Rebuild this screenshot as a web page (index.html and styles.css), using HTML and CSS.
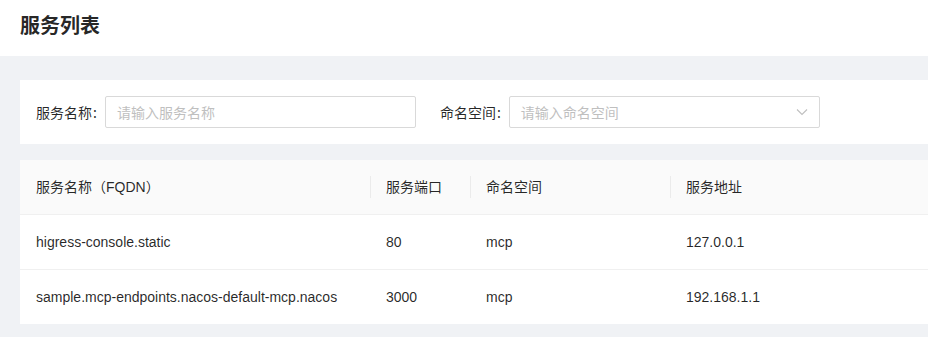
FILE: index.html
```html
<!DOCTYPE html>
<html lang="zh-CN">
<head>
<meta charset="utf-8">
<title>服务列表</title>
<link rel="stylesheet" href="styles.css">
</head>
<body>
<div class="page">
  <header class="page-header">
    <h1 class="page-title">服务列表</h1>
  </header>
  <main class="content">
    <section class="filter-card">
      <div class="form-item">
        <label class="form-label">服务名称<span class="colon">:</span></label>
        <div class="input"><span class="placeholder">请输入服务名称</span></div>
      </div>
      <div class="form-item">
        <label class="form-label">命名空间<span class="colon">:</span></label>
        <div class="input select">
          <span class="placeholder">请输入命名空间</span>
          <svg class="arrow" viewBox="0 0 12 12" width="12" height="12"><path d="M1 3.5 L6 8.5 L11 3.5" fill="none" stroke="#bfbfbf" stroke-width="1.1"/></svg>
        </div>
      </div>
    </section>
    <section class="table-card">
      <div class="row head">
        <div class="cell c1">服务名称（FQDN）</div>
        <div class="cell c2 sep">服务端口</div>
        <div class="cell c3 sep">命名空间</div>
        <div class="cell c4 sep">服务地址</div>
      </div>
      <div class="row">
        <div class="cell c1">higress-console.static</div>
        <div class="cell c2">80</div>
        <div class="cell c3">mcp</div>
        <div class="cell c4">127.0.0.1</div>
      </div>
      <div class="row last">
        <div class="cell c1">sample.mcp-endpoints.nacos-default-mcp.nacos</div>
        <div class="cell c2">3000</div>
        <div class="cell c3">mcp</div>
        <div class="cell c4">192.168.1.1</div>
      </div>
    </section>
  </main>
</div>
</body>
</html>
```
FILE: styles.css
```css
* { box-sizing: border-box; }
html, body { margin: 0; padding: 0; }
body {
  font-family: "Liberation Sans", "Noto Sans CJK SC", sans-serif;
  font-size: 14px;
  color: rgba(0,0,0,0.85);
  background: #f0f2f5;
  width: 928px;
  height: 337px;
  overflow: hidden;
}
.page-header {
  background: #fff;
  height: 56px;
  padding: 0 20px;
  display: flex;
  align-items: center;
}
.page-title {
  margin: 0;
  font-size: 20px;
  font-weight: 700;
  line-height: 28px;
  color: rgba(0,0,0,0.85);
  font-family: "Noto Sans CJK SC", sans-serif;
  padding-bottom: 6px;
}
.content {
  padding: 24px 0 0 20px;
  display: flex;
  flex-direction: column;
  gap: 16px;
}
.filter-card {
  background: #fff;
  height: 64px;
  padding: 16px;
  display: flex;
  align-items: center;
}
.form-item {
  display: flex;
  align-items: center;
  margin-right: 24px;
}
.form-label {
  font-family: "Noto Sans CJK SC", sans-serif;
  line-height: 32px;
  white-space: nowrap;
}
.colon {
  margin: 0 8px 0 1px;
}
.input {
  width: 311px;
  height: 32px;
  border: 1px solid #d9d9d9;
  border-radius: 2px;
  padding: 0 11px;
  display: flex;
  align-items: center;
  justify-content: space-between;
  background: #fff;
}
.placeholder {
  color: #bfbfbf;
  font-family: "Noto Sans CJK SC", sans-serif;
}
.arrow { margin-right: 0; }
.table-card {
  background: #fff;
}
.row {
  display: flex;
  border-bottom: 1px solid #f0f0f0;
}
.row.last { border-bottom: none; }
.row.head { background: #fafafa; }
.cell {
  padding: 16px;
  line-height: 22px;
  position: relative;
  white-space: nowrap;
}
.c1 { width: 350px; }
.c2 { width: 100px; }
.c3 { width: 200px; }
.c4 { flex: 1; }
.sep::before {
  content: "";
  position: absolute;
  left: 0;
  top: 50%;
  width: 1px;
  height: 22px;
  transform: translateY(-50%);
  background: rgba(0,0,0,0.06);
}
```
